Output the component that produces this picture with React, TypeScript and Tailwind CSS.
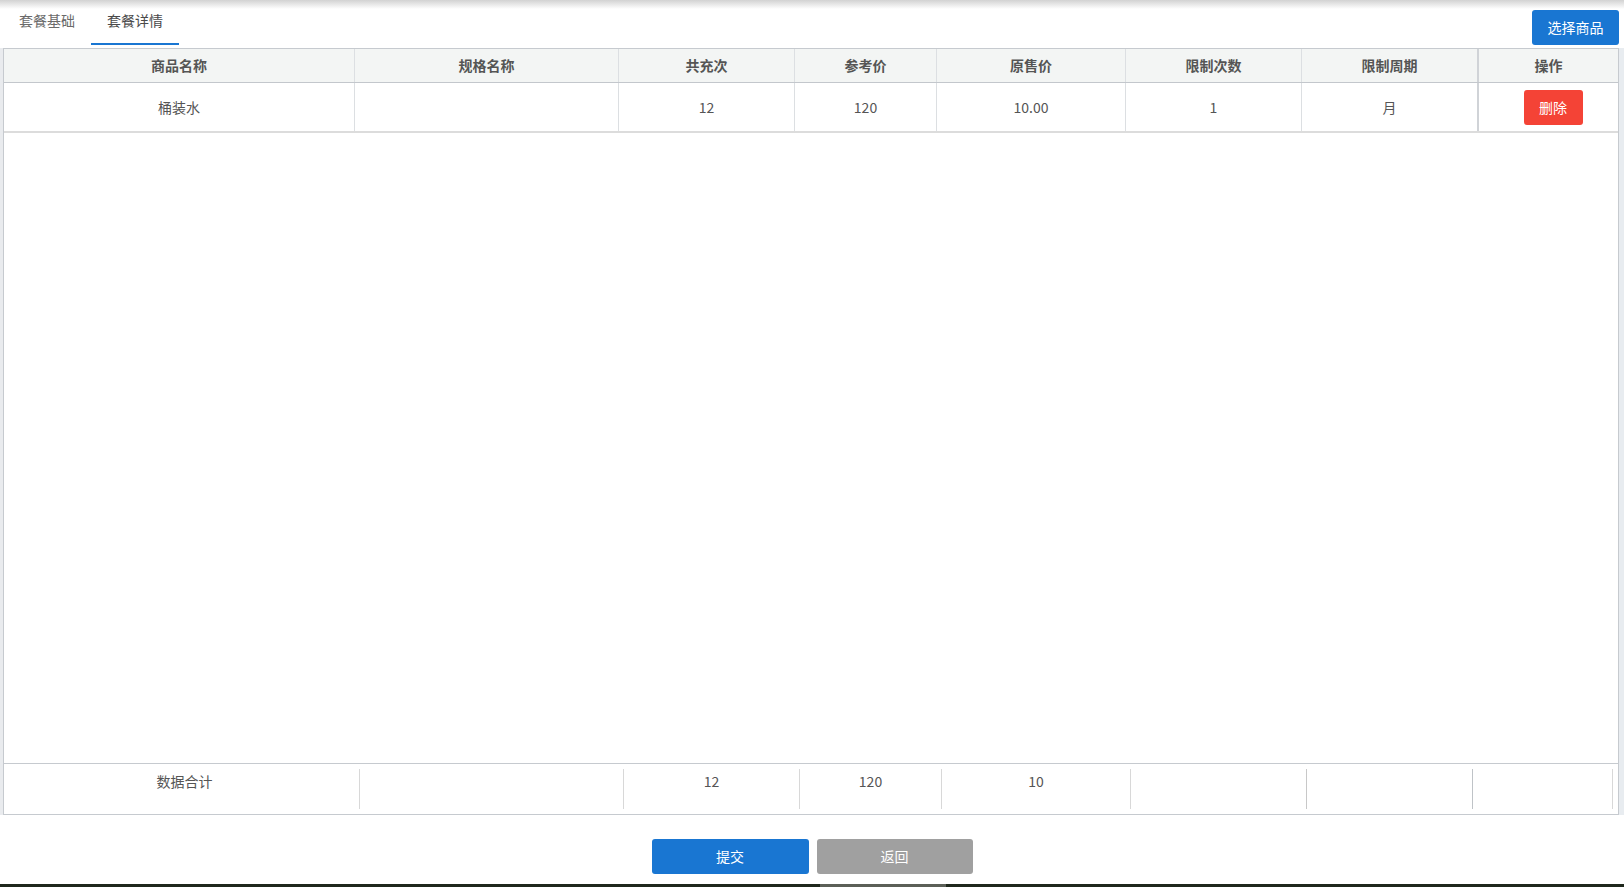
import React from "react";

const font = { fontFamily: '"Noto Sans CJK SC", "Noto Sans", sans-serif' };

const headers = ["商品名称", "规格名称", "共充次", "参考价", "原售价", "限制次数", "限制周期"];
const colW = ["w-[350px]", "w-[264px]", "w-[176px]", "w-[142px]", "w-[189px]", "w-[176px]", "w-[176px]"];
const row = ["桶装水", "", "12", "120", "10.00", "1", "月"];

export default function App() {
  return (
    <div className="relative w-full h-[887px] bg-white overflow-hidden flex flex-col text-[14px] text-[#555]" style={font}>
      <div className="pointer-events-none absolute top-0 left-0 right-0 h-[9px] bg-linear-to-b from-[#d2d2d2] to-[rgba(255,255,255,0)]" />

      {/* top bar */}
      <div className="h-[48px] flex justify-between items-start">
        <div className="flex pl-[3px]">
          <div className="w-[88px] h-[45px] flex justify-center pt-[9px] text-[#6a6a6a] leading-[22px]">套餐基础</div>
          <div className="w-[88px] h-[45px] flex justify-center pt-[9px] text-[#4a4a4a] leading-[22px] border-b-2 border-[#1976d2]">套餐详情</div>
        </div>
        <button className="mt-[10px] mr-[5px] w-[87px] h-[35px] rounded-[3px] bg-[#1976d2] text-white text-[14px] leading-none pb-[2px]">选择商品</button>
      </div>

      {/* table area */}
      <div className="flex h-[767px]">
        <div className="w-[3px] bg-[#e9ebee]" />
        <div className="w-[1616px] border border-[#c6cacf] flex flex-col">
          {/* header */}
          <div className="flex h-[34px] bg-[#f3f5f4] border-b border-[#c3c7cc] font-bold text-[#555]">
            {headers.map((h, i) => (
              <div key={h} className={`${colW[i]} flex items-center justify-center ${i > 0 ? "border-l border-[#dcdfe2]" : ""}`}>{h}</div>
            ))}
            <div className="flex-1 flex items-center justify-center border-l-2 border-[#d0d3d7]">操作</div>
          </div>
          {/* data row */}
          <div className="flex h-[50px] border-b-2 border-[#dcdcdc]">
            {row.map((c, i) => (
              <div key={i} className={`${colW[i]} flex items-center justify-center ${i > 0 ? "border-l border-[#dcdfe2]" : ""}`}>{c}</div>
            ))}
            <div className="flex-1 flex items-center justify-center border-l-2 border-[#d0d3d7]">
              <button className="ml-[9px] w-[59px] h-[35px] rounded-[3px] bg-[#f44336] text-white text-[14px] leading-none pb-[1px]">删除</button>
            </div>
          </div>
          {/* empty body */}
          <div className="flex-1" />
          {/* footer */}
          <div className="h-[51px] border-t border-[#c6cacf] flex">
            <div className="w-[355px] flex justify-center pt-[7px] pl-[6px] leading-5">数据合计</div>
            <div className="w-[264px] border-l border-[#d8d8d8] my-[5px]" />
            <div className="w-[176px] border-l border-[#d8d8d8] my-[5px] flex justify-center pt-[2px] leading-5">12</div>
            <div className="w-[142px] border-l border-[#d8d8d8] my-[5px] flex justify-center pt-[2px] leading-5">120</div>
            <div className="w-[189px] border-l border-[#d8d8d8] my-[5px] flex justify-center pt-[2px] leading-5">10</div>
            <div className="w-[176px] border-l border-[#d8d8d8] my-[5px]" />
            <div className="w-[166px] border-l border-[#c8c8c8] my-[5px]" />
            <div className="w-[140px] border-l border-[#bfc3c7] my-[5px]" />
            <div className="flex-1 border-l border-[#d8d8d8] my-[5px]" />
          </div>
        </div>
        <div className="flex-1 bg-[#e8ecf0]" />
      </div>

      {/* bottom buttons */}
      <div className="flex justify-center gap-[8px] mt-[24px]">
        <button className="w-[157px] h-[35px] rounded-[3px] bg-[#1976d2] text-white text-[14px] leading-none pb-[1px]">提交</button>
        <button className="w-[156px] h-[35px] rounded-[3px] bg-[#a0a0a0] text-white text-[14px] leading-none pb-[1px]">返回</button>
      </div>

      <div className="flex-1" />
      <div className="h-[3px] flex bg-[#1f281c]">
        <div className="w-[820px]" />
        <div className="w-[126px] bg-[#5b5f57]" />
      </div>
    </div>
  );
}
